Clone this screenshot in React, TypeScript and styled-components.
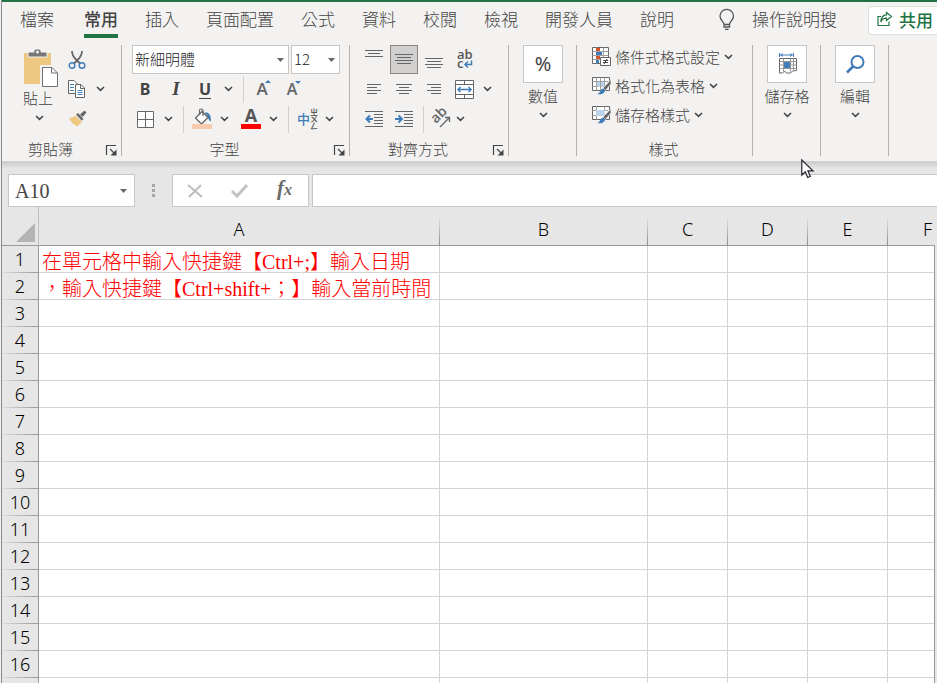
import React from 'react';
import styled, { createGlobalStyle, css } from 'styled-components';

const UI = '"Noto Sans", "Noto Sans CJK TC", sans-serif';
const CJK = '"Noto Sans CJK TC", "Noto Sans", sans-serif';
const SERIF = '"Liberation Serif", "Noto Sans CJK TC", serif';

const GREEN = '#217346';
const INK = '#444444';
const BLUE = '#3f7cb8';
const LINE = '#666666';

const Global = createGlobalStyle`
  *, *::before, *::after { box-sizing: border-box; }
  body { margin: 0; background: #f0f0f0; overflow: hidden; }
  button, input, select { font: inherit; color: inherit; margin: 0; }
  svg { display: block; flex: none; overflow: visible; }
`;

const Window = styled.div`
  display: flex;
  flex-direction: column;
  height: 100vh;
  margin-left: 1px;
  border-left: 1px solid #8a8a8a;
  background: #e6e6e6;
  color: ${INK};
  font-family: ${CJK};
  font-weight: 300;
  overflow: hidden;
`;

const Ribbon = styled.header`
  background: #f3f2f1;
  border-top: 2px solid ${GREEN};
`;

const TabBar = styled.nav`
  display: flex;
  align-items: center;
  gap: 27px;
  height: 36px;
  padding-left: 18px;
`;

const Tab = styled.button<{ $active?: boolean; $file?: boolean }>`
  flex: none;
  height: 36px;
  padding: 0;
  border: 0;
  background: none;
  font-size: 17px;
  line-height: 34px;
  padding-bottom: 2px;
  white-space: nowrap;
  margin-right: ${(p) => (p.$file ? '3px' : '0')};
  ${(p) =>
    p.$active &&
    css`
      font-weight: 500;
      box-shadow: inset 0 -4px 0 ${GREEN};
    `}
`;

const TellMe = styled(Tab)`
  display: flex;
  align-items: center;
  gap: 17px;
  margin-left: 18px;
`;

const Share = styled.button`
  display: flex;
  align-items: center;
  gap: 6px;
  height: 29px;
  margin-left: auto;
  padding: 0 4px 2px 8px;
  border: 1px solid #e1dfdd;
  border-right: 0;
  border-radius: 4px 0 0 4px;
  background: #ffffff;
  color: ${GREEN};
  font-size: 17px;
  font-weight: 500;
  line-height: 25px;
  white-space: nowrap;
`;

const Groups = styled.div`
  display: flex;
  padding: 7px 0 5px;
`;

const Group = styled.section<{ $w: number }>`
  display: flex;
  flex: none;
  flex-direction: column;
  justify-content: space-between;
  width: ${(p) => p.$w}px;
  height: 111px;
  border-right: 1px solid #b3b0ad;
  font-size: 15px;
`;

const GroupBody = styled.div<{ $pad: number }>`
  display: flex;
  padding-left: ${(p) => p.$pad}px;
`;

const Caption = styled.footer`
  display: flex;
  align-items: flex-end;
  height: 14px;
`;

const CaptionText = styled.span`
  flex: 1;
  padding-right: 2px;
  text-align: center;
  line-height: 14px;
`;

const Launcher = styled.button`
  width: 20px;
  height: 11px;
  padding: 0 4px 0 5px;
  border: 0;
  background: none;
`;

const Stack = styled.div`
  display: flex;
  flex-direction: column;
`;

const ToolRow = styled.div<{ $h?: number }>`
  display: flex;
  align-items: stretch;
  height: ${(p) => p.$h ?? 30}px;
`;

const Tool = styled.button<{ $w: number; $on?: boolean }>`
  display: flex;
  flex: none;
  align-items: center;
  justify-content: center;
  width: ${(p) => p.$w}px;
  padding: 0;
  border: 0;
  background: none;
  ${(p) =>
    p.$on &&
    css`
      margin: 0 1px;
      background: #d2d0ce;
      box-shadow: inset 0 0 0 1px #8a8886;
    `}
`;

const Letter = styled.span<{ $kind: 'b' | 'i' | 'u' }>`
  font-family: ${(p) => (p.$kind === 'i' ? '"Liberation Serif", serif' : UI)};
  font-size: ${(p) => (p.$kind === 'i' ? 19 : 16)}px;
  font-weight: 700;
  font-style: ${(p) => (p.$kind === 'i' ? 'italic' : 'normal')};
  line-height: 18px;
  border-bottom: ${(p) => (p.$kind === 'u' ? `1px solid ${INK}` : '1px solid transparent')};
`;

const Divider = styled.span<{ $w: number }>`
  display: flex;
  justify-content: center;
  flex: none;
  width: ${(p) => p.$w}px;
  padding: 2px 0 1px;
  &::before {
    content: '';
    width: 1px;
    background: #d2d0ce;
  }
`;

const SelectFrame = styled.label<{ $w: number }>`
  display: grid;
  align-items: center;
  width: ${(p) => p.$w}px;
  height: 29px;
  border: 1px solid #c8c6c4;
  background: #ffffff;
  color: #222222;
  > * { grid-area: 1 / 1; }
  > svg { justify-self: end; margin-right: 4px; pointer-events: none; }
`;

const Select = styled.select`
  width: 100%;
  height: 27px;
  padding: 0 16px 2px 2px;
  border: 0;
  background: none;
  appearance: none;
  font-size: 15px;
`;

const FontPickers = styled.div`
  display: flex;
  gap: 2px;
`;

const Paste = styled.button`
  display: flex;
  flex-direction: column;
  align-items: flex-start;
  width: 40px;
  padding: 3px 0 0;
  border: 0;
  background: none;
  font-size: 15px;
  line-height: 20px;
  > svg:last-child { margin: 7px 0 0 12px; }
`;

const BigTool = styled.button`
  display: flex;
  flex: 1;
  flex-direction: column;
  align-items: center;
  padding: 0 0 0 1px;
  border: 0;
  background: none;
  line-height: 20px;
  > svg { margin-top: 6px; }
`;

const BigFace = styled.span`
  display: flex;
  align-items: center;
  justify-content: center;
  width: 40px;
  height: 38px;
  margin-bottom: 3px;
  border: 1px solid #c8c6c4;
  background: #ffffff;
  font-family: ${UI};
  font-size: 20px;
  font-weight: 400;
`;

const StyleList = styled.div`
  display: flex;
  flex-direction: column;
  gap: 3px;
`;

const StyleItem = styled.button`
  display: flex;
  align-items: center;
  gap: 4px;
  height: 26px;
  padding: 0 0 2px;
  border: 0;
  background: none;
  font-size: 15px;
  line-height: 24px;
  white-space: nowrap;
`;

const FormulaRow = styled.div`
  display: flex;
  height: 46px;
  padding-top: 13px;
  background: linear-gradient(#cfcfcf 0 2px, #d9d9d9 4px, #dedede 6px, #e6e6e6 7px);
`;

const NameBox = styled.label`
  display: flex;
  align-items: center;
  width: 127px;
  margin-left: 6px;
  padding: 0 7px 0 6px;
  border: 1px solid #c6c6c6;
  background: #ffffff;
`;

const NameInput = styled.input`
  flex: 1;
  min-width: 0;
  padding: 2px 0 0;
  border: 0;
  background: none;
  font-family: ${SERIF};
  font-size: 20px;
`;

const Grip = styled.span`
  display: grid;
  place-items: center;
  width: 37px;
`;

const FxBox = styled.div`
  display: flex;
  width: 137px;
  margin-right: 3px;
  padding-right: 2px;
  border: 1px solid #c6c6c6;
  background: #ffffff;
`;

const FxButton = styled.button`
  display: grid;
  flex: 1;
  place-items: center;
  padding: 0;
  border: 0;
  background: none;
`;

const FormulaInput = styled.input`
  flex: 1;
  min-width: 0;
  border: 1px solid #c6c6c6;
  border-right: 0;
  background: #ffffff;
`;

const Sheet = styled.main`
  position: relative;
  flex: 1;
  min-height: 0;
  margin-right: 2px;
  overflow: hidden;
  &::after {
    content: '';
    position: absolute;
    top: 38px;
    right: 0;
    bottom: 0;
    width: 1px;
    background: #999999;
  }
`;

const Grid = styled.table`
  width: max-content;
  table-layout: fixed;
  border-collapse: separate;
  border-spacing: 0;
`;

const Col = styled.col<{ $w: number }>`
  width: ${(p) => p.$w}px;
`;

const Corner = styled.td`
  height: 39px;
  padding: 0 3px 3px 0;
  border-right: 1px solid #c0c0c0;
  border-bottom: 1px solid #999999;
  vertical-align: bottom;
  > svg { margin-left: auto; }
`;

const ColHead = styled.th`
  height: 39px;
  padding: 5px 1px 0 0;
  border-bottom: 1px solid #999999;
  background: linear-gradient(#dcdcdc, #8c8c8c) right bottom / 1px 26px no-repeat;
  color: #000000;
  font-family: ${UI};
  font-size: 18px;
  font-weight: 300;
  line-height: 24px;
`;

const RowHead = styled.th`
  height: 27px;
  padding: 0 0 1px;
  border-right: 1px solid #999999;
  background: linear-gradient(90deg, #dcdcdc, #999999) left bottom / 100% 1px no-repeat;
  color: #000000;
  font-family: ${UI};
  font-size: 18px;
  font-weight: 300;
  line-height: 26px;
`;

const Cell = styled.td`
  height: 27px;
  padding: 3px 0 0 3px;
  border-right: 1px solid #d4d4d4;
  border-bottom: 1px solid #d4d4d4;
  background: #ffffff;
  color: #ff0000;
  font-family: ${SERIF};
  font-size: 20px;
  line-height: 23px;
  white-space: nowrap;
`;

const CellText = styled.div`
  height: 23px;
  padding-top: 2px;
  line-height: 23px;
`;

const Pointer = styled.svg`
  position: absolute;
  left: 801px;
  top: 159px;
  pointer-events: none;
`;

const Chevron = () => (
  <svg width="9" height="6" viewBox="0 0 9 6" fill="none" stroke={INK} strokeWidth="1.5">
    <path d="M1 1l3.5 3.4L8 1" />
  </svg>
);

const Caret = () => (
  <svg width="7" height="4" viewBox="0 0 7 4">
    <path d="M0 0h7L3.5 4z" fill="#666" />
  </svg>
);

/* Horizontal rules of a paragraph icon: each entry is [x, y, length]. */
const Rules = ({ rows, h = 30, children }: { rows: number[][]; h?: number; children?: React.ReactNode }) => (
  <svg width="18" height={h} viewBox={`0 0 18 ${h}`}>
    {rows.map(([x, y, w]) => (
      <rect key={`${x}-${y}`} x={x} y={y} width={w} height="1" fill={LINE} />
    ))}
    {children}
  </svg>
);

const indentRows = [[0, 7, 18], [9, 10, 9], [9, 13, 9], [9, 16, 9], [9, 19, 9], [0, 22, 18]];

const LauncherIcon = () => (
  <svg width="11" height="11" viewBox="0 0 11 11" fill="none" stroke={INK}>
    <path d="M.5 10V.5H10M4 4l5 5" strokeWidth="1.2" />
    <path d="M10.500 4.500v6h-6z" fill={INK} stroke="none" />
  </svg>
);

const PasteIcon = () => (
  <svg width="36" height="40" viewBox="0 0 36 40">
    <path d="M1 5h27v31H1z" fill="#eec780" />
    <path d="M5 9V4h6V2.500L12.500 1h4L18 2.500V4h6v5z" fill="#767676" stroke="#f3f2f1" />
    <circle cx="14.500" cy="4" r="1.500" fill="#f3f2f1" />
    <path d="M18.500 18.500H29l6 6v15H18.500z" fill="#fff" stroke="#f3f2f1" strokeWidth="3" />
    <path d="M19.500 19.500H29l5.500 5.500v13.500h-15zM28.500 19.500V25H34" fill="#fff" stroke="#707070" />
  </svg>
);

const CutIcon = () => (
  <svg width="18" height="20" viewBox="0 0 18 20" fill="none">
    <path d="M4 1c0 4 1.500 6 4 8.500l4 4M14 1c0 4-1.500 6-4 8.500l-4 4" stroke={LINE} strokeWidth="1.800" />
    <circle cx="4" cy="15.500" r="2.800" stroke={BLUE} strokeWidth="1.400" />
    <circle cx="14" cy="15.500" r="2.800" stroke={BLUE} strokeWidth="1.400" />
  </svg>
);

const CopyIcon = () => (
  <svg width="18" height="20" viewBox="0 0 18 20" fill="#fff" stroke={LINE}>
    <path d="M.5 1.500H6L9.500 5v9.500h-9z" />
    <path d="M2 5.500h4M2 8.500h4M2 11.500h4" stroke={BLUE} />
    <path d="M7.500 5.500H13l3.500 3.500v9.500h-9zM12.500 5.500v4h4" />
    <path d="M9.500 11.500h5M9.500 13.500h5M9.500 15.500h5" stroke={BLUE} />
  </svg>
);

const BrushIcon = () => (
  <svg width="18" height="18" viewBox="0 0 18 18">
    <path d="M0 8c3 0 5-1 6-2.500l7 6.500c-1.500 1-3.500 3-4.500 4.500C4.500 15 2 12 0 8z" fill="#eec780" />
    <path d="M7 4.500L9 3l5.500 6-1.800 1.700z" fill={LINE} />
    <path d="M11 4.500L15.500.5l2 2L13.500 7z" fill={LINE} />
  </svg>
);

const BordersIcon = () => (
  <svg width="17" height="17" viewBox="0 0 17 17" fill="#fff" stroke={LINE}>
    <path d="M.5.5h16v16H.5zM8.500.5v16M.5 8.500h16" />
  </svg>
);

const FillIcon = () => (
  <svg width="20" height="30" viewBox="0 0 20 30" fill="none">
    <path d="M12.500 8.500c4-.5 6.500 1 6.500 9-2-1-3-2.500-3-5z" fill={BLUE} />
    <path d="M3.500 14L10 7.500l6 6-6.500 6.500z" fill="#fff" stroke={LINE} strokeWidth="1.300" />
    <path d="M7.500 11V6.500c0-2 3.500-2 3.500 0V12" stroke={LINE} strokeWidth="1.200" />
    <path d="M0 20h20v5H0z" fill="#f8cbad" />
  </svg>
);

const FontColorIcon = () => (
  <svg width="20" height="30" viewBox="0 0 20 30">
    <text x="10" y="18" textAnchor="middle" fontFamily="Open Sans, sans-serif" fontSize="18" fontWeight="700" fill="#555">A</text>
    <path d="M0 20h20v5H0z" fill="#ff0000" />
  </svg>
);

const SizeIcon = ({ up }: { up?: boolean }) => (
  <svg width="16" height="18" viewBox="0 0 16 18">
    <text x="6" y="15" textAnchor="middle" fontFamily="Open Sans, sans-serif" fontSize={up ? 17 : 16} fontWeight="600" fill="#666">A</text>
    <path d={up ? 'M9 3l3-3 3 3z' : 'M9 1h6l-3 3z'} fill={BLUE} />
  </svg>
);

const PhoneticIcon = () => (
  <svg width="22" height="30" viewBox="0 0 22 30" fontFamily="Noto Sans CJK TC, sans-serif">
    <text fontWeight="500">
      <tspan x="-1" y="20" fontSize="13" fill={BLUE}>中</tspan>
      <tspan x="12" y="11" fontSize="8" fill={INK}>ㄓ</tspan>
      <tspan x="12" y="18" fontSize="8" fill={INK}>ㄨ</tspan>
      <tspan x="12" y="25" fontSize="8" fill={INK}>ㄥ</tspan>
    </text>
  </svg>
);

const WrapIcon = () => (
  <svg width="18" height="22" viewBox="0 0 18 22">
    <text fontFamily="Open Sans, sans-serif" fontSize="13" fontWeight="600" fill="#555">
      <tspan x="2" y="10">ab</tspan>
      <tspan x="2" y="19">c</tspan>
    </text>
    <path d="M16.500 11.500V15.500H11M13 12.500l-3 3 3 3" fill="none" stroke={BLUE} strokeWidth="1.500" />
  </svg>
);

const MergeIcon = () => (
  <svg width="19" height="19" viewBox="0 0 19 19" fill="none" stroke={LINE}>
    <path d="M.5.5h18v18H.5z" fill="#fff" />
    <path d="M.5 4.500h18M.5 14.500h18M9.500.5v4M9.500 14.500v4" />
    <path d="M3 9.500h13M5.500 7L3 9.500 5.500 12M13.500 7L16 9.500 13.500 12" stroke={BLUE} strokeWidth="1.500" />
  </svg>
);

const OrientIcon = () => (
  <svg width="20" height="20" viewBox="0 0 20 20" fontFamily="Open Sans, sans-serif">
    <text x="0" y="0" fontSize="14" fontWeight="600" fill="#666" transform="translate(5 15) rotate(-45)">ab</text>
    <path d="M9 18l9-9M14 8.500h4.500V13" fill="none" stroke={LINE} strokeWidth="1.300" />
  </svg>
);

const SheetBase = () => (
  <g>
    <path d="M.5 1.500h17v13H.5z" fill="#fff" stroke={LINE} />
    <path d="M.5 5.500h16M.5 10.500h16M4.500 1.500v13M12.500 1.500v13" stroke="#a0a0a0" fill="none" />
  </g>
);

const BrushOverlay = () => (
  <g>
    <path d="M19 3.500l-8 8.500 2.500 2.500L19 8z" fill={LINE} stroke="#f3f2f1" strokeWidth=".8" />
    <path d="M5 18c3 0 3-5 6-5.500 2 .5 2.500 2 1.500 3.500C11 18.500 8 18.500 5 18z" fill={BLUE} />
  </g>
);

const ConditionalIcon = () => (
  <svg width="19" height="20" viewBox="0 0 19 20">
    <path d="M.5.5h16v16H.5z" fill="#fff" stroke={LINE} />
    <path d="M.5 4.500h16M.5 8.500h16M.5 12.500h16M4.500.5v16M11.500.5v16" stroke="#a0a0a0" />
    <path d="M4 1h4v3H4zM4 9h4v3H4z" fill="#d8532c" />
    <path d="M4 5h6v3H4zM4 13h3v3H4z" fill={BLUE} />
    <path d="M8.500 10.500h10v8h-10z" fill="#fff" stroke={LINE} />
    <path d="M11 13.500h5M11 15.500h5M15 12l-3 5" stroke={INK} />
  </svg>
);

const TableFormatIcon = () => (
  <svg width="19" height="20" viewBox="0 0 19 20">
    <SheetBase />
    <path d="M5 6h7v5H5z" fill="#bdd3ea" />
    <path d="M8.500 1.500v13" stroke="#a0a0a0" />
    <BrushOverlay />
  </svg>
);

const CellStyleIcon = () => (
  <svg width="19" height="20" viewBox="0 0 19 20">
    <SheetBase />
    <path d="M4 5h9v6H4z" fill="#bdd3ea" />
    <BrushOverlay />
  </svg>
);

const CellsIcon = () => (
  <svg width="19" height="22" viewBox="0 0 19 22" fill="none">
    <path d="M1.500 0v4M15.500 0v4M2 2h13M5 .5L3 2l2 1.500M12 .5L14 2l-2 1.500" stroke={BLUE} />
    <path d="M1.500 5.500h17v12l-4 .5-2 2h-4l-2-2-2 2h-3z" stroke={LINE} />
    <path d="M1.500 8.500h17M1.500 15.500h17M5.500 5.500v13M12.500 5.500v13M15.500 5.500v12M1.500 12h17" stroke="#999" />
    <path d="M6 9h6v6H6z" fill={BLUE} />
  </svg>
);

const FindIcon = () => (
  <svg width="19" height="19" viewBox="0 0 19 19" fill="none" stroke={BLUE}>
    <circle cx="11.500" cy="7" r="6" strokeWidth="2" />
    <path d="M7 11.500L1 17.500" strokeWidth="2.600" />
  </svg>
);

const BulbIcon = () => (
  <svg width="16" height="21" viewBox="0 0 16 21" fill="none" stroke="#555" strokeWidth="1.300">
    <path d="M5 15.500c0-3-4-4-4-8.500a6.700 6.500 0 0 1 13.500 0c0 4.500-4 5.500-4 8.500zM5 15.500V18h5.500v-2.500M6 20.300h3.500" />
  </svg>
);

const ShareIcon = () => (
  <svg width="16" height="16" viewBox="0 0 16 16" fill="none" stroke={GREEN} strokeWidth="1.200">
    <path d="M4 5.500H1v9h11v-4" />
    <path d="M9.500 1.500l5 4-5 4V7.200C7 7.200 5 8 3.800 11 4 6.500 6 4 9.500 3.800z" />
  </svg>
);

const Columns = [
  { name: 'A', width: 401 },
  { name: 'B', width: 208 },
  ...['C', 'D', 'E', 'F'].map((name) => ({ name, width: 80 })),
];

const Notes: Record<number, string> = {
  1: '在單元格中輸入快捷鍵【Ctrl+;】輸入日期',
  2: '，輸入快捷鍵【Ctrl+shift+；】輸入當前時間',
};

const RowNumbers = Array.from({ length: 17 }, (_, i) => i + 1);

const MoreTabs = ['插入', '頁面配置', '公式', '資料', '校閱', '檢視', '開發人員', '說明'];

const GroupCaption = ({ text, launcher }: { text: string; launcher?: boolean }) => (
  <Caption>
    <CaptionText>{text}</CaptionText>
    {launcher && (
      <Launcher aria-label={`${text}設定`}>
        <LauncherIcon />
      </Launcher>
    )}
  </Caption>
);

const Drop = ({ w, label }: { w: number; label: string }) => (
  <Tool $w={w} aria-label={label}>
    <Chevron />
  </Tool>
);

const BigGroup = ({ w, text, children }: { w: number; text: string; children: React.ReactNode }) => (
  <Group $w={w}>
    <GroupBody $pad={0}>
      <BigTool>
        <BigFace>{children}</BigFace>
        {text}
        <Chevron />
      </BigTool>
    </GroupBody>
  </Group>
);

export default function App() {
  return (
    <Window lang="zh-Hant">
      <Global />
      <Ribbon>
        <TabBar>
          <Tab $file>檔案</Tab>
          <Tab $active>常用</Tab>
          {MoreTabs.map((t) => (
            <Tab key={t}>{t}</Tab>
          ))}
          <TellMe>
            <BulbIcon />
            操作說明搜
          </TellMe>
          <Share>
            <ShareIcon />
            共用
          </Share>
        </TabBar>

        <Groups>
          <Group $w={120}>
            <GroupBody $pad={21}>
              <Paste>
                <PasteIcon />
                貼上
                <Chevron />
              </Paste>
              <Stack>
                <ToolRow $h={29}>
                  <Tool $w={28} aria-label="剪下"><CutIcon /></Tool>
                </ToolRow>
                <ToolRow>
                  <Tool $w={28} aria-label="複製"><CopyIcon /></Tool>
                  <Drop w={18} label="複製選項" />
                </ToolRow>
                <ToolRow>
                  <Tool $w={30} aria-label="複製格式"><BrushIcon /></Tool>
                </ToolRow>
              </Stack>
            </GroupBody>
            <GroupCaption text="剪貼簿" launcher />
          </Group>

          <Group $w={228}>
            <GroupBody $pad={10}>
              <Stack>
                <FontPickers>
                  <SelectFrame $w={157}>
                    <Select aria-label="字型" defaultValue="新細明體">
                      <option>新細明體</option>
                    </Select>
                    <Caret />
                  </SelectFrame>
                  <SelectFrame $w={49}>
                    <Select aria-label="字型大小" defaultValue="12">
                      <option>12</option>
                    </Select>
                    <Caret />
                  </SelectFrame>
                </FontPickers>
                <ToolRow>
                  <Tool $w={26}><Letter $kind="b">B</Letter></Tool>
                  <Tool $w={36}><Letter $kind="i">I</Letter></Tool>
                  <Tool $w={22}><Letter $kind="u">U</Letter></Tool>
                  <Drop w={24} label="底線選項" />
                  <Divider $w={7} />
                  <Tool $w={34} aria-label="放大字型"><SizeIcon up /></Tool>
                  <Tool $w={26} aria-label="縮小字型"><SizeIcon /></Tool>
                </ToolRow>
                <ToolRow>
                  <Tool $w={26} aria-label="框線"><BordersIcon /></Tool>
                  <Drop w={20} label="框線選項" />
                  <Divider $w={10} />
                  <Tool $w={28} aria-label="填滿色彩"><FillIcon /></Tool>
                  <Drop w={17} label="填滿色彩選項" />
                  <Tool $w={36} aria-label="字型色彩"><FontColorIcon /></Tool>
                  <Drop w={9} label="字型色彩選項" />
                  <Divider $w={20} />
                  <Tool $w={22} aria-label="注音標示"><PhoneticIcon /></Tool>
                  <Drop w={18} label="注音標示選項" />
                </ToolRow>
              </Stack>
            </GroupBody>
            <GroupCaption text="字型" launcher />
          </Group>

          <Group $w={159}>
            <GroupBody $pad={9}>
              <Stack>
                <ToolRow $h={29}>
                  <Tool $w={30} aria-label="靠上對齊">
                    <Rules h={29} rows={[[0, 5, 18], [3, 8, 12], [0, 11, 18]]} />
                  </Tool>
                  <Tool $w={28} $on aria-label="置中對齊">
                    <Rules h={29} rows={[[0, 9, 18], [2, 12, 14], [0, 15, 18], [2, 18, 14]]} />
                  </Tool>
                  <Tool $w={30} aria-label="靠下對齊">
                    <Rules h={29} rows={[[0, 13, 18], [2, 16, 14], [0, 19, 18], [2, 22, 14]]} />
                  </Tool>
                  <Tool $w={30} aria-label="自動換行"><WrapIcon /></Tool>
                </ToolRow>
                <ToolRow>
                  <Tool $w={30} aria-label="靠左對齊">
                    <Rules rows={[[2, 10, 14], [2, 13, 10], [2, 16, 14], [2, 19, 10]]} />
                  </Tool>
                  <Tool $w={30} aria-label="置中">
                    <Rules rows={[[1, 10, 16], [4, 13, 10], [1, 16, 16], [4, 19, 10]]} />
                  </Tool>
                  <Tool $w={30} aria-label="靠右對齊">
                    <Rules rows={[[2, 10, 14], [6, 13, 10], [2, 16, 14], [6, 19, 10]]} />
                  </Tool>
                  <Tool $w={31} aria-label="跨欄置中"><MergeIcon /></Tool>
                  <Drop w={15} label="跨欄置中選項" />
                </ToolRow>
                <ToolRow>
                  <Tool $w={30} aria-label="減少縮排">
                    <Rules rows={indentRows}>
                      <path d="M8 15H1.500M5 11.500L1.500 15 5 18.500" fill="none" stroke={BLUE} strokeWidth="2" />
                    </Rules>
                  </Tool>
                  <Tool $w={30} aria-label="增加縮排">
                    <Rules rows={indentRows}>
                      <path d="M0 15h6.500M3.500 11.500L7 15l-3.500 3.500" fill="none" stroke={BLUE} strokeWidth="2" />
                    </Rules>
                  </Tool>
                  <Divider $w={8} />
                  <Tool $w={28} aria-label="方向"><OrientIcon /></Tool>
                  <Drop w={11} label="方向選項" />
                </ToolRow>
              </Stack>
            </GroupBody>
            <GroupCaption text="對齊方式" launcher />
          </Group>

          <BigGroup w={68} text="數值">%</BigGroup>

          <Group $w={176}>
            <GroupBody $pad={15}>
              <StyleList>
                <StyleItem><ConditionalIcon />條件式格式設定<Chevron /></StyleItem>
                <StyleItem><TableFormatIcon />格式化為表格<Chevron /></StyleItem>
                <StyleItem><CellStyleIcon />儲存格樣式<Chevron /></StyleItem>
              </StyleList>
            </GroupBody>
            <GroupCaption text="樣式" />
          </Group>

          <BigGroup w={68} text="儲存格"><CellsIcon /></BigGroup>
          <BigGroup w={68} text="編輯"><FindIcon /></BigGroup>
        </Groups>
      </Ribbon>

      <FormulaRow>
        <NameBox>
          <NameInput aria-label="名稱方塊" defaultValue="A10" />
          <Caret />
        </NameBox>
        <Grip>
          <svg width="3" height="13" viewBox="0 0 3 13" fill="#a6a6a6">
            <path d="M0 0h3v3H0zM0 5h3v3H0zM0 10h3v3H0z" />
          </svg>
        </Grip>
        <FxBox>
          <FxButton aria-label="取消">
            <svg width="16" height="14" viewBox="0 0 16 14" stroke="#bdbdbd" strokeWidth="2">
              <path d="M1 1l14 12M14 1L2 13" />
            </svg>
          </FxButton>
          <FxButton aria-label="輸入">
            <svg width="17" height="14" viewBox="0 0 17 14" fill="none" stroke="#c2c2c2" strokeWidth="3">
              <path d="M1 7l5 5L16 1" />
            </svg>
          </FxButton>
          <FxButton aria-label="插入函數">
            <svg width="18" height="22" viewBox="0 0 18 22">
              <text x="2" y="15" fontFamily="Liberation Serif, serif" fontStyle="italic" fontWeight="700" fontSize="21" fill="#6a6a6a">
                f<tspan fontSize="16">x</tspan>
              </text>
            </svg>
          </FxButton>
        </FxBox>
        <FormulaInput aria-label="資料編輯列" />
      </FormulaRow>

      <Sheet>
        <Grid>
          <colgroup>
            <Col $w={37} />
            {Columns.map((c) => (
              <Col key={c.name} $w={c.width} />
            ))}
          </colgroup>
          <thead>
            <tr>
              <Corner>
                <svg width="19" height="19" viewBox="0 0 19 19">
                  <path d="M19 0v19H0z" fill="#b4b4b4" />
                </svg>
              </Corner>
              {Columns.map((c) => (
                <ColHead key={c.name} scope="col">{c.name}</ColHead>
              ))}
            </tr>
          </thead>
          <tbody>
            {RowNumbers.map((n) => (
              <tr key={n}>
                <RowHead scope="row">{n}</RowHead>
                {Columns.map((c) => (
                  <Cell key={c.name}>{c.name === 'A' && Notes[n] ? <CellText>{Notes[n]}</CellText> : null}</Cell>
                ))}
              </tr>
            ))}
          </tbody>
        </Grid>
      </Sheet>

      <Pointer width="13" height="20" viewBox="0 0 13 20">
        <path d="M.8 1v15l3.500-3.300 2.400 5.800 2.600-1.100-2.400-5.600H12z" fill="#fff" stroke="#222233" strokeWidth="1.200" />
      </Pointer>
    </Window>
  );
}
